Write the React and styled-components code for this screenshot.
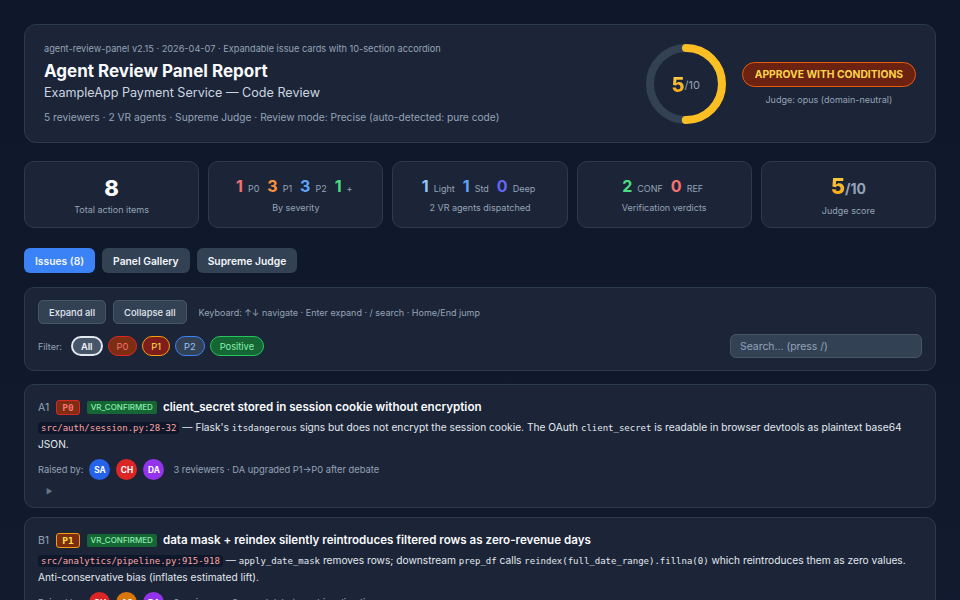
import React from 'react';
import styled, { createGlobalStyle } from 'styled-components';

const GlobalStyle = createGlobalStyle`
  * { box-sizing: border-box; }
  html, body { margin: 0; padding: 0; background: #0f172a; }
  body {
    font-family: Inter, "Noto Sans", "Liberation Sans", sans-serif;
    color: #e2e8f0;
    -webkit-font-smoothing: antialiased;
  }
`;

const Page = styled.div`
  min-height: 100vh;
  padding: 24px;
  background: linear-gradient(180deg, #0f172a 0%, #111a2e 100%);
`;

/* ---------- header ---------- */
const HeaderCard = styled.header`
  display: flex;
  align-items: center;
  justify-content: space-between;
  padding: 17px 19px;
  background: #1c2537;
  border: 1px solid #2c3a50;
  border-radius: 12px;
`;

const HeaderText = styled.div`
  display: flex;
  flex-direction: column;
`;

const Meta = styled.div`
  font-size: 9.2px;
  line-height: 14px;
  color: #94a3b8;
`;

const Title = styled.h1`
  margin: 4px 0 0;
  font-size: 17px;
  line-height: 22px;
  font-weight: 700;
  color: #f8fafc;
`;

const Subtitle = styled.div`
  margin-top: 2px;
  font-size: 12.6px;
  line-height: 18px;
  color: #cbd5e1;
`;

const InfoLine = styled.div`
  margin-top: 7px;
  font-size: 10.2px;
  line-height: 16px;
  color: #94a3b8;
`;

const HeaderRight = styled.div`
  display: flex;
  align-items: center;
  gap: 16px;
`;

const Gauge = styled.div`
  position: relative;
  width: 80px;
  height: 80px;
`;

const GaugeLabel = styled.div`
  position: absolute;
  inset: 0;
  display: flex;
  align-items: center;
  justify-content: center;
  padding-top: 2px;
`;

const ScoreDigit = styled.span`
  font-size: ${p => p.$size}px;
  font-weight: 800;
  background: linear-gradient(180deg, #fcd34d 0%, #f59e0b 100%);
  -webkit-background-clip: text;
  background-clip: text;
  color: transparent;
`;

const ScoreOf = styled.span`
  font-size: ${p => p.$size}px;
  font-weight: ${p => p.$bold ? 700 : 400};
  color: #94a3b8;
`;

const Verdict = styled.div`
  display: flex;
  flex-direction: column;
  align-items: center;
  gap: 6px;
`;

const VerdictBadge = styled.div`
  height: 25px;
  padding: 0 12px;
  display: flex;
  align-items: center;
  border-radius: 13px;
  background: #6b2211;
  border: 1px solid #ea580c;
  color: #fcd34d;
  font-size: 10.3px;
  font-weight: 700;
`;

const JudgeNote = styled.div`
  font-size: 9px;
  line-height: 13px;
  color: #94a3b8;
`;

/* ---------- stats ---------- */
const StatsRow = styled.section`
  margin-top: 18px;
  display: grid;
  grid-template-columns: repeat(5, 1fr);
  gap: 9px;
`;

const StatCard = styled.div`
  height: 67px;
  padding-top: 2px;
  display: flex;
  flex-direction: column;
  align-items: center;
  justify-content: center;
  background: #1c2537;
  border: 1px solid #2c3a50;
  border-radius: 10px;
`;

const BigNumber = styled.div`
  font-size: 22px;
  line-height: 26px;
  font-weight: 800;
  color: #f8fafc;
`;

const StatLine = styled.div`
  display: flex;
  align-items: baseline;
  gap: 5px;
  line-height: 20px;
`;

const StatNum = styled.span`
  font-size: 16px;
  font-weight: 700;
  color: ${p => p.$color};
`;

const StatUnit = styled.span`
  font-size: 9px;
  color: #94a3b8;
  margin-right: 3px;
`;

const StatLabel = styled.div`
  margin-top: 2px;
  font-size: 9px;
  line-height: 14px;
  color: #94a3b8;
`;

/* ---------- tabs ---------- */
const Tabs = styled.nav`
  margin-top: 20px;
  display: flex;
  gap: 7px;
`;

const Tab = styled.button`
  height: 25px;
  padding: 0 11px;
  border: none;
  border-radius: 6px;
  font-family: inherit;
  font-size: 10.3px;
  font-weight: 600;
  color: #f1f5f9;
  background: ${p => p.$active ? '#3b82f6' : '#334155'};
`;

/* ---------- toolbar ---------- */
const Toolbar = styled.section`
  margin-top: 14px;
  padding: 12px 13px 12px;
  background: #1c2537;
  border: 1px solid #2c3a50;
  border-radius: 10px;
`;

const ToolRow = styled.div`
  display: flex;
  align-items: center;
  gap: 7px;
`;

const FilterRow = styled.div`
  margin-top: 10px;
  display: flex;
  align-items: center;
  justify-content: space-between;
`;

const ChipGroup = styled.div`
  display: flex;
  align-items: center;
  gap: 5px;
`;

const ToolButton = styled.button`
  height: 24px;
  padding: 0 10px;
  border: 1px solid #475569;
  border-radius: 5px;
  background: #334155;
  font-family: inherit;
  font-size: 9.4px;
  font-weight: 500;
  color: #e2e8f0;
`;

const Hint = styled.span`
  margin-left: 5px;
  font-size: 9px;
  color: #94a3b8;
`;

const FilterLabel = styled.span`
  margin-right: 4px;
  font-size: 9px;
  color: #94a3b8;
`;

const chipTones = {
  all: { bg: '#475569', border: '#e2e8f0', fg: '#f1f5f9' },
  p0: { bg: '#7c2d12', border: '#dc2626', fg: '#f87171' },
  p1: { bg: '#7f1d1d', border: '#f59e0b', fg: '#fde047' },
  p2: { bg: '#334155', border: '#3b82f6', fg: '#93c5fd' },
  pos: { bg: '#166534', border: '#22c55e', fg: '#86efac' },
};

const Chip = styled.button`
  height: 20px;
  padding: 0 ${p => p.$tone === 'pos' ? 9 : 8}px;
  border-radius: 10px;
  border: ${p => p.$tone === 'all' ? 2 : 1}px solid ${p => chipTones[p.$tone].border};
  background: ${p => chipTones[p.$tone].bg};
  color: ${p => chipTones[p.$tone].fg};
  font-family: inherit;
  font-size: 9.3px;
  font-weight: ${p => p.$tone === 'all' ? 600 : 400};
`;

const Search = styled.input`
  width: 192px;
  height: 24px;
  padding: 0 9px;
  border: 1px solid #475569;
  border-radius: 6px;
  background: #334155;
  font-family: inherit;
  font-size: 10.4px;
  color: #e2e8f0;
  &::placeholder { color: #94a3b8; }
`;

/* ---------- issues ---------- */
const IssueList = styled.section`
  margin-top: 13px;
  display: flex;
  flex-direction: column;
  gap: 9px;
`;

const IssueCard = styled.article`
  padding: 13px 13px 9px;
  background: #1c2537;
  border: 1px solid #2c3a50;
  border-radius: 10px;
`;

const IssueHead = styled.div`
  display: flex;
  align-items: center;
  gap: 7px;
  height: 18px;
`;

const IssueId = styled.span`
  font-size: 10.5px;
  color: #94a3b8;
`;

const sevTones = {
  P0: { bg: '#7c2d12', border: '#dc2626', fg: '#f87171' },
  P1: { bg: '#7c2d12', border: '#f59e0b', fg: '#fde047' },
};

const SevBadge = styled.span`
  height: 15px;
  padding: 0 5px;
  display: inline-flex;
  align-items: center;
  border-radius: 3px;
  border: 1px solid ${p => sevTones[p.$sev].border};
  background: ${p => sevTones[p.$sev].bg};
  color: ${p => sevTones[p.$sev].fg};
  font-family: "DejaVu Sans Mono", "Liberation Mono", monospace;
  font-size: 9.5px;
  font-weight: 700;
`;

const VrBadge = styled.span`
  height: 13px;
  padding: 0 4px;
  display: inline-flex;
  align-items: center;
  border-radius: 2px;
  background: #166534;
  color: #86efac;
  font-size: 8px;
  font-weight: 500;
  margin-right: -1px;
`;

const IssueTitle = styled.h3`
  margin: 0;
  font-size: 11.6px;
  font-weight: 600;
  color: #f8fafc;
`;

const IssueBody = styled.p`
  margin: 4px 0 0;
  font-size: 10.2px;
  line-height: 15.5px;
  color: #e2e8f0;
`;

const Loc = styled.code`
  padding: 1px 3px;
  border-radius: 3px;
  background: #0f172a;
  color: #fca5a5;
  font-family: "DejaVu Sans Mono", "Liberation Mono", monospace;
  font-size: 9px;
`;

const Mono = styled.code`
  font-family: "DejaVu Sans Mono", "Liberation Mono", monospace;
  font-size: 9px;
  color: #e2e8f0;
`;

const RaisedRow = styled.div`
  margin-top: 7px;
  display: flex;
  align-items: center;
  gap: 6px;
  font-size: 9.3px;
  color: #94a3b8;
`;

const Avatar = styled.span`
  width: 21px;
  height: 21px;
  border-radius: 50%;
  display: inline-flex;
  align-items: center;
  justify-content: center;
  background: ${p => p.$color};
  color: #fff;
  font-size: 8.3px;
  font-weight: 700;
`;

const RaisedNote = styled.span`
  margin-left: 3px;
`;

const Disclosure = styled.div`
  margin: 6px 0 0 8px;
  font-size: 7px;
  line-height: 12px;
  color: #64748b;
`;

const avatarColors = {
  SA: '#2563eb',
  CH: '#dc2626',
  DA: '#9333ea',
  AS: '#d97706',
};

const issues = [
  {
    id: 'A1',
    sev: 'P0',
    title: 'client_secret stored in session cookie without encryption',
    body: (
      <>
        <Loc>src/auth/session.py:28-32</Loc> — Flask's <Mono>itsdangerous</Mono> signs but does not
        encrypt the session cookie. The OAuth <Mono>client_secret</Mono> is readable in browser devtools
        as plaintext base64 JSON.
      </>
    ),
    by: ['SA', 'CH', 'DA'],
    note: '3 reviewers · DA upgraded P1→P0 after debate',
  },
  {
    id: 'B1',
    sev: 'P1',
    title: 'data mask + reindex silently reintroduces filtered rows as zero-revenue days',
    body: (
      <>
        <Loc>src/analytics/pipeline.py:915-918</Loc> — <Mono>apply_date_mask</Mono> removes rows;
        downstream <Mono>prep_df</Mono> calls <Mono>reindex(full_date_range).fillna(0)</Mono> which
        reintroduces them as zero values. Anti-conservative bias (inflates estimated lift).
      </>
    ),
    by: ['CH', 'AS', 'DA'],
    note: '3 reviewers · 2-round debate on bias direction',
  },
];

function ScoreGauge() {
  const r = 36;
  const c = 2 * Math.PI * r;
  return (
    <Gauge>
      <svg width="80" height="80" viewBox="0 0 80 80">
        <circle cx="40" cy="40" r={r} fill="none" stroke="#334155" strokeWidth="8" />
        <circle
          cx="40" cy="40" r={r} fill="none" stroke="#fbbf24" strokeWidth="8"
          strokeLinecap="round"
          strokeDasharray={`${c * 0.5} ${c}`}
          transform="rotate(-90 40 40)"
        />
      </svg>
      <GaugeLabel>
        <ScoreDigit $size={20}>5</ScoreDigit>
        <ScoreOf $size={11}>/10</ScoreOf>
      </GaugeLabel>
    </Gauge>
  );
}

export default function App() {
  return (
    <>
      <GlobalStyle />
      <Page>
        <HeaderCard>
          <HeaderText>
            <Meta>agent-review-panel v2.15 · 2026-04-07 · Expandable issue cards with 10-section accordion</Meta>
            <Title>Agent Review Panel Report</Title>
            <Subtitle>ExampleApp Payment Service — Code Review</Subtitle>
            <InfoLine>5 reviewers · 2 VR agents · Supreme Judge · Review mode: Precise (auto-detected: pure code)</InfoLine>
          </HeaderText>
          <HeaderRight>
            <ScoreGauge />
            <Verdict>
              <VerdictBadge>APPROVE WITH CONDITIONS</VerdictBadge>
              <JudgeNote>Judge: opus (domain-neutral)</JudgeNote>
            </Verdict>
          </HeaderRight>
        </HeaderCard>

        <StatsRow>
          <StatCard>
            <BigNumber>8</BigNumber>
            <StatLabel>Total action items</StatLabel>
          </StatCard>
          <StatCard>
            <StatLine>
              <StatNum $color="#f87171">1</StatNum><StatUnit>P0</StatUnit>
              <StatNum $color="#fb923c">3</StatNum><StatUnit>P1</StatUnit>
              <StatNum $color="#60a5fa">3</StatNum><StatUnit>P2</StatUnit>
              <StatNum $color="#4ade80">1</StatNum><StatUnit>+</StatUnit>
            </StatLine>
            <StatLabel>By severity</StatLabel>
          </StatCard>
          <StatCard>
            <StatLine>
              <StatNum $color="#93c5fd">1</StatNum><StatUnit>Light</StatUnit>
              <StatNum $color="#60a5fa">1</StatNum><StatUnit>Std</StatUnit>
              <StatNum $color="#6366f1">0</StatNum><StatUnit>Deep</StatUnit>
            </StatLine>
            <StatLabel>2 VR agents dispatched</StatLabel>
          </StatCard>
          <StatCard>
            <StatLine>
              <StatNum $color="#4ade80">2</StatNum><StatUnit>CONF</StatUnit>
              <StatNum $color="#f87171">0</StatNum><StatUnit>REF</StatUnit>
            </StatLine>
            <StatLabel>Verification verdicts</StatLabel>
          </StatCard>
          <StatCard>
            <BigNumber>
              <ScoreDigit $size={22}>5</ScoreDigit>
              <ScoreOf $size={14} $bold>/10</ScoreOf>
            </BigNumber>
            <StatLabel>Judge score</StatLabel>
          </StatCard>
        </StatsRow>

        <Tabs>
          <Tab $active>Issues (8)</Tab>
          <Tab>Panel Gallery</Tab>
          <Tab>Supreme Judge</Tab>
        </Tabs>

        <Toolbar>
          <ToolRow>
            <ToolButton>Expand all</ToolButton>
            <ToolButton>Collapse all</ToolButton>
            <Hint>Keyboard: ↑↓ navigate · Enter expand · / search · Home/End jump</Hint>
          </ToolRow>
          <FilterRow>
            <ChipGroup>
              <FilterLabel>Filter:</FilterLabel>
              <Chip $tone="all">All</Chip>
              <Chip $tone="p0">P0</Chip>
              <Chip $tone="p1">P1</Chip>
              <Chip $tone="p2">P2</Chip>
              <Chip $tone="pos">Positive</Chip>
            </ChipGroup>
            <Search placeholder="Search... (press /)" />
          </FilterRow>
        </Toolbar>

        <IssueList>
          {issues.map(issue => (
            <IssueCard key={issue.id}>
              <IssueHead>
                <IssueId>{issue.id}</IssueId>
                <SevBadge $sev={issue.sev}>{issue.sev}</SevBadge>
                <VrBadge>VR_CONFIRMED</VrBadge>
                <IssueTitle>{issue.title}</IssueTitle>
              </IssueHead>
              <IssueBody>{issue.body}</IssueBody>
              <RaisedRow>
                <span>Raised by:</span>
                {issue.by.map(a => <Avatar key={a} $color={avatarColors[a]}>{a}</Avatar>)}
                <RaisedNote>{issue.note}</RaisedNote>
              </RaisedRow>
              <Disclosure>▶</Disclosure>
            </IssueCard>
          ))}
        </IssueList>
      </Page>
    </>
  );
}
